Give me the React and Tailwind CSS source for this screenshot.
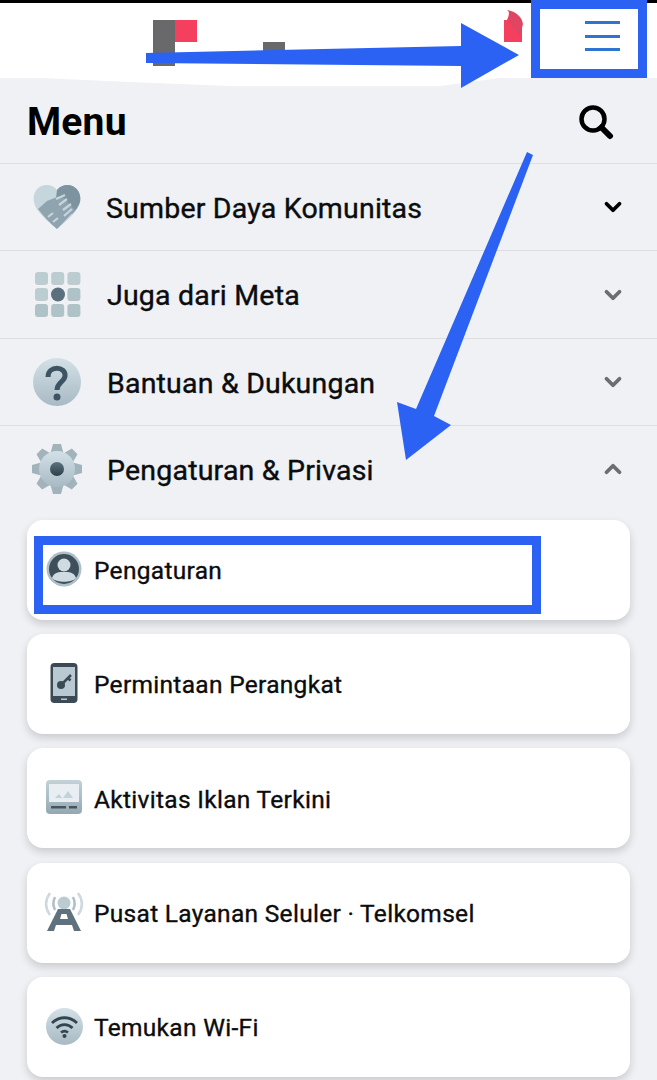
import { ChevronDown, ChevronUp } from "lucide-react";

function Defs() {
  return (
    <svg width="0" height="0" className="absolute">
      <defs>
        <linearGradient id="disc" x1="0" y1="0" x2="0" y2="1">
          <stop offset="0" stopColor="#d3e0e7" />
          <stop offset="1" stopColor="#a8bac4" />
        </linearGradient>
        <linearGradient id="dark" x1="0" y1="0" x2="0" y2="1">
          <stop offset="0" stopColor="#5c7280" />
          <stop offset="1" stopColor="#2f3f49" />
        </linearGradient>
        <linearGradient id="panel" x1="0" y1="0" x2="0" y2="1">
          <stop offset="0" stopColor="#c4d2d9" />
          <stop offset="1" stopColor="#93a8b3" />
        </linearGradient>
      </defs>
    </svg>
  );
}

function HeartIcon() {
  return (
    <svg width="50" height="46" viewBox="0 0 50 46" className="shrink-0 blur-[0.5px]">
      <path d="M25 45 C15 36 4 28 2 18 C0 8 7 1 14 1 C19 1 23 3 25 6 C27 3 31 1 36 1 C43 1 50 8 48 18 C46 28 35 36 25 45 Z" fill="#c5d6dd" />
      <path d="M25 6 C27 3 31 1 36 1 C43 1 50 8 48 18 C47 22 44 26 40 30 L24 14 Z" fill="#7d939f" />
      <path d="M6 25 L15 17 L25 13 L30 12 L43 26 L30 40 L25 45 C19 40 12 33 6 25 Z" fill="#90a4af" />
      <path d="M24 15 L33 11 M27 21 L35 15 M31 26 L39 20 M32 32 L40 25 M16 33 L21 29 M21 38 L26 34" stroke="#c5d6dd" strokeWidth="2.2" />
    </svg>
  );
}

function GridIcon() {
  const cells = [0, 1, 2, 3, 5, 6, 7, 8];
  return (
    <svg width="46" height="46" viewBox="0 0 46 46" className="shrink-0 blur-[0.5px]">
      {cells.map((c) => (
        <rect
          key={c}
          x={(c % 3) * 16.2}
          y={Math.floor(c / 3) * 16}
          width="13"
          height="13"
          rx="3"
          fill={c > 4 ? "#aec2c8" : "#bccdd2"}
        />
      ))}
      <circle cx="23" cy="22.5" r="7" fill="#5b707d" />
    </svg>
  );
}

function QuestionIcon() {
  return (
    <svg width="50" height="50" viewBox="0 0 50 50" className="shrink-0 blur-[0.5px]">
      <circle cx="25" cy="25" r="24" fill="url(#disc)" />
      <path d="M16 20 C16 8 34 9 33 19 C32.500 25 25 25 25 33" fill="none" stroke="#3f5462" strokeWidth="5" />
      <circle cx="25" cy="40" r="3.500" fill="#3f5462" />
    </svg>
  );
}

function GearIcon() {
  const teeth = [0, 45, 90, 135, 180, 225, 270, 315];
  return (
    <svg width="52" height="52" viewBox="0 0 52 52" className="shrink-0 blur-[0.5px]">
      {teeth.map((a) => (
        <path key={a} d="M22 1 L30 1 L33 12 L19 12 Z" fill="#a3b3bb" transform={`rotate(${a} 26 26)`} />
      ))}
      <circle cx="26" cy="26" r="18" fill="url(#disc)" />
      <circle cx="26" cy="26" r="7" fill="url(#dark)" />
    </svg>
  );
}

function AvatarIcon() {
  return (
    <svg width="36" height="36" viewBox="0 0 36 36" className="blur-[0.4px]">
      <circle cx="18" cy="18" r="17.500" fill="#aebfc8" />
      <circle cx="18" cy="18" r="15" fill="#3c4f5b" />
      <circle cx="18" cy="14" r="6.500" fill="#cfdbe1" />
      <path d="M6 27 C8 21 13 21 18 21 C23 21 28 21 30 27 C26 32 10 32 6 27 Z" fill="#cfdbe1" />
    </svg>
  );
}

function PhoneIcon() {
  return (
    <svg width="28" height="40" viewBox="0 0 28 40" className="blur-[0.4px]">
      <rect x="0.500" y="0" width="27" height="40" rx="4" fill="#3b4a54" />
      <rect x="3" y="4" width="22" height="29" fill="#b9c9d1" />
      <circle cx="11" cy="22" r="4" fill="#3b4a54" />
      <path d="M13 20 L21 12 M18 15 L20.500 17.500" stroke="#3b4a54" strokeWidth="2.500" />
      <rect x="11" y="35.500" width="6" height="1.500" fill="#b9c9d1" />
    </svg>
  );
}

function AdIcon() {
  return (
    <svg width="36" height="34" viewBox="0 0 36 34" className="blur-[0.4px]">
      <rect x="0" y="0" width="36" height="34" rx="4" fill="url(#panel)" />
      <rect x="3" y="4" width="30" height="18" fill="#e8eef1" />
      <path d="M9 18 L13 14 L16 18 M17 18 L22 11 L27 18 Z" fill="#c3d1d8" />
      <rect x="5" y="26" width="15" height="2.500" fill="#43565f" />
      <rect x="23" y="26" width="8" height="2.500" fill="#43565f" />
    </svg>
  );
}

function TowerIcon() {
  return (
    <svg width="42" height="44" viewBox="0 0 42 44" className="blur-[0.4px]">
      <path d="M7 3 C2 10 2 18 7 25 M35 3 C40 10 40 18 35 25" fill="none" stroke="#ced9df" strokeWidth="2.500" />
      <path d="M12 7 C10 11 10 16 12 20 M30 7 C32 11 32 16 30 20" fill="none" stroke="#b0c0c8" strokeWidth="2.500" />
      <circle cx="21" cy="13" r="6.500" fill="#bccbd2" />
      <path d="M15 19 L27 19 L38 41 L31 41 L29 35 L13 35 L11 41 L4 41 Z" fill="#5e717c" />
      <path d="M18.500 24 L23.500 24 L25 29 L17 29 Z" fill="#fff" />
    </svg>
  );
}

function WifiIcon() {
  return (
    <svg width="37" height="37" viewBox="0 0 37 37" className="blur-[0.4px]">
      <circle cx="18.500" cy="18.500" r="18.500" fill="url(#disc)" />
      <path d="M6 15 C13 8 24 8 31 15 M10.500 20 C15 15.500 22 15.500 26.500 20 M15 24.500 C17 23 20 23 22 24.500" fill="none" stroke="#34454f" strokeWidth="2.800" />
      <circle cx="18.500" cy="28" r="2" fill="#34454f" />
    </svg>
  );
}

const sections = [
  { label: "Sumber Daya Komunitas", icon: <HeartIcon />, left: "pl-[32px]", gap: "w-[74px]", chevron: "text-black" },
  { label: "Juga dari Meta", icon: <GridIcon />, left: "pl-[35px]", gap: "w-[72px]", chevron: "text-[#6b6d70]" },
  { label: "Bantuan & Dukungan", icon: <QuestionIcon />, left: "pl-[32px]", gap: "w-[75px]", chevron: "text-[#6b6d70]" },
  { label: "Pengaturan & Privasi", icon: <GearIcon />, left: "pl-[31px]", gap: "w-[76px]", chevron: "text-[#6b6d70]", open: true },
];

const items = [
  { label: "Pengaturan", icon: <AvatarIcon /> },
  { label: "Permintaan Perangkat", icon: <PhoneIcon /> },
  { label: "Aktivitas Iklan Terkini", icon: <AdIcon /> },
  { label: "Pusat Layanan Seluler · Telkomsel", icon: <TowerIcon /> },
  { label: "Temukan Wi-Fi", icon: <WifiIcon /> },
];

export default function App() {
  return (
    <div className="relative h-[1080px] overflow-hidden bg-[#eff1f5] font-['Roboto',sans-serif] text-[#0b0c0e]">
      <Defs />

      {/* top bar, mostly painted over in the screenshot */}
      <div className="h-[3px] bg-black" />
      <div className="relative h-[75px] bg-white">
        <div className="absolute left-[153px] top-[17px] h-[46px] w-[22px] bg-[#69696b]" />
        <div className="absolute left-[175px] top-[17px] h-[22px] w-[22px] bg-[#f43f5e]" />
        <div className="absolute left-[263px] top-[39px] h-[16px] w-[22px] bg-[#69696b]" />
        <div className="absolute left-[504px] top-[17px] h-[22px] w-[18px] bg-[#f43f5e]" />
        <div className="absolute left-[585px] top-[18px] flex w-[35px] flex-col gap-[10.500px]">
          <div className="h-[3px] bg-[#2f74d0]" />
          <div className="h-[3px] bg-[#2f74d0]" />
          <div className="h-[3px] bg-[#2f74d0]" />
        </div>
      </div>

      <div className="flex h-[85px] items-center justify-between pl-[27px] pr-[43px] pt-[3px]">
        <h1 className="text-[39px] font-bold leading-none tracking-[0.2px] text-black">Menu</h1>
        <svg width="36" height="36" viewBox="0 0 36 36" fill="none" stroke="#000">
          <circle cx="15" cy="15" r="11.500" strokeWidth="4.500" />
          <path d="M23.500 23.500 L32 32" strokeWidth="6" strokeLinecap="round" />
        </svg>
      </div>

      {sections.map((s) => (
        <div key={s.label} className={`flex h-[87.4px] items-center border-t border-[#dcdee2] pr-[31px] ${s.left}`}>
          <div className="flex w-0 items-center justify-start">{s.icon}</div>
          <div className={`shrink-0 ${s.gap}`} />
          <span className="pt-[4px] text-[28.500px] font-normal leading-none tracking-[0.2px] [-webkit-text-stroke:0.4px_#0b0c0e]">
            {s.label}
          </span>
          {s.open ? (
            <ChevronUp size={26} strokeWidth={3.500} className={`ml-auto ${s.chevron}`} />
          ) : (
            <ChevronDown size={26} strokeWidth={3.500} className={`ml-auto ${s.chevron}`} />
          )}
        </div>
      ))}

      <div className="mt-[7px] flex flex-col gap-[14.400px] px-[27px]">
        {items.map((item) => (
          <div
            key={item.label}
            className="flex h-[100px] items-center rounded-2xl bg-white shadow-[0_4px_8px_rgba(0,0,0,0.16)]"
          >
            <div className="flex w-[67px] shrink-0 justify-center pb-[2px] pl-[7px]">{item.icon}</div>
            <span className="pt-[3px] text-[24.500px] font-normal leading-none tracking-[0.3px] [-webkit-text-stroke:0.35px_#0b0c0e]">
              {item.label}
            </span>
          </div>
        ))}
      </div>

      {/* tutorial annotations drawn on top of the screenshot */}
      <div className="absolute left-[531px] top-0 h-[78px] w-[116px] border-[9px] border-[#2b62f4]" />
      <div className="absolute left-[34px] top-[536px] h-[78px] w-[507px] border-[9px] border-[#2b62f4]" />
      <svg className="absolute left-0 top-0" width="657" height="1080" viewBox="0 0 657 1080">
        <path d="M40 78 L130 82 L230 86 L440 86 L500 78 Z" fill="#fff" />
        <path d="M507 20 C510 14 509 11 507 10 C516 11 522 17 523 24 L520 36 Z" fill="#e04561" />
        <path d="M146 53 L461 46 L461 23 L519 55 L461 88 L461 66 L146 63 Z" fill="#2b62f4" />
        <path d="M527 152 L533 155 L434 416 L451 425 L406 460 L397 402 L416 409 Z" fill="#2b62f4" />
      </svg>
    </div>
  );
}
